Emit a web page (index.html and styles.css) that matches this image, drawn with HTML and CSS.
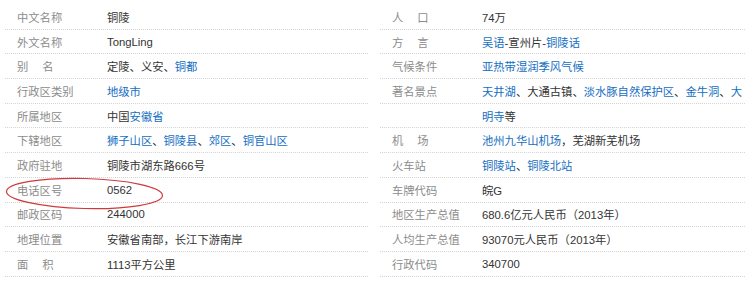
FILE: index.html
```html
<!DOCTYPE html>
<html lang="zh-CN">
<head>
<meta charset="utf-8">
<title>铜陵 基本信息</title>
<link rel="stylesheet" href="styles.css">
</head>
<body>
<div class="info">
  <dl class="col">
    <div class="row"><dt>中文名称</dt><dd>铜陵</dd></div>
    <div class="row"><dt>外文名称</dt><dd>TongLing</dd></div>
    <div class="row"><dt class="two">别名</dt><dd>定陵、义安、<a>铜都</a></dd></div>
    <div class="row"><dt>行政区类别</dt><dd><a>地级市</a></dd></div>
    <div class="row"><dt>所属地区</dt><dd>中国<a>安徽省</a></dd></div>
    <div class="row"><dt>下辖地区</dt><dd><a>狮子山区</a>、<a>铜陵县</a>、<a>郊区</a>、<a>铜官山区</a></dd></div>
    <div class="row"><dt>政府驻地</dt><dd>铜陵市湖东路666号</dd></div>
    <div class="row"><dt>电话区号</dt><dd>0562</dd></div>
    <div class="row"><dt>邮政区码</dt><dd>244000</dd></div>
    <div class="row"><dt>地理位置</dt><dd>安徽省南部，长江下游南岸</dd></div>
    <div class="row"><dt class="two">面积</dt><dd>1113平方公里</dd></div>
  </dl>
  <dl class="col">
    <div class="row"><dt class="two">人口</dt><dd>74万</dd></div>
    <div class="row"><dt class="two">方言</dt><dd><a>吴语</a>-宣州片-<a>铜陵话</a></dd></div>
    <div class="row"><dt>气候条件</dt><dd><a>亚热带湿润季风气候</a></dd></div>
    <div class="row"><dt>著名景点</dt><dd><a>天井湖</a>、大通古镇、<a>淡水豚自然保护区</a>、<a>金牛洞</a>、<a>大</a></dd></div>
    <div class="row"><dt></dt><dd><a>明寺</a>等</dd></div>
    <div class="row"><dt class="two">机场</dt><dd><a>池州九华山机场</a>，芜湖新芜机场</dd></div>
    <div class="row"><dt>火车站</dt><dd><a>铜陵站</a>、<a>铜陵北站</a></dd></div>
    <div class="row"><dt>车牌代码</dt><dd>皖G</dd></div>
    <div class="row"><dt>地区生产总值</dt><dd>680.6亿元人民币（2013年）</dd></div>
    <div class="row"><dt>人均生产总值</dt><dd>93070元人民币（2013年）</dd></div>
    <div class="row"><dt>行政代码</dt><dd>340700</dd></div>
  </dl>
</div>
<svg class="mark" width="751" height="301" viewBox="0 0 751 301" aria-hidden="true">
  <ellipse cx="84.5" cy="193.5" rx="78" ry="15" transform="rotate(1.5 84.5 193.5)" fill="none" stroke="#d0393b" stroke-width="1.2"/>
</svg>
</body>
</html>
```
FILE: styles.css
```css
html, body {
  margin: 0;
  padding: 0;
  background: #fff;
}
body {
  position: relative;
  width: 751px;
  height: 301px;
  overflow: hidden;
  font-family: "Liberation Sans", "Noto Sans CJK SC", sans-serif;
  font-size: 11.3px;
  color: #333;
}
.info {
  display: grid;
  grid-template-columns: 363px 365px;
  column-gap: 12px;
  padding: 5px 0 0 5px;
}
.col {
  margin: 0;
  display: flex;
  flex-direction: column;
}
.row {
  display: flex;
  align-items: center;
  box-sizing: border-box;
  height: 24.7px;
  border-bottom: 1px dotted #d4d4d4;
}
dt {
  box-sizing: border-box;
  width: 102px;
  padding-left: 12px;
  color: #8c8c8c;
  white-space: nowrap;
  flex: none;
}
dt.two {
  letter-spacing: 14px;
}
dd {
  margin: 0;
  white-space: nowrap;
  color: #333;
}
a {
  color: #136ec2;
  text-decoration: none;
}
.mark {
  position: absolute;
  left: 0;
  top: 0;
  pointer-events: none;
}
```
